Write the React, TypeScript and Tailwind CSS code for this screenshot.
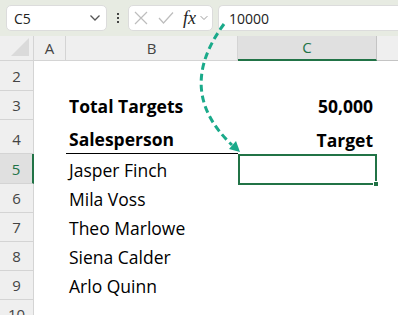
import React from 'react';

const rows = [
    {n: 2, h: 30},
    {n: 3, h: 29},
    {n: 4, h: 34},
    {n: 5, h: 30},
    {n: 6, h: 29},
    {n: 7, h: 29},
    {n: 8, h: 29},
    {n: 9, h: 29},
    {n: 10, h: 29},
];

const names = ['Jasper Finch', 'Mila Voss', 'Theo Marlowe', 'Siena Calder', 'Arlo Quinn'];

const Chevron = ({className}: {className?: string}) => (
    <svg width="12" height="8" viewBox="0 0 12 8" className={className}>
        <path d="M1.5 1.5 L6 6 L10.5 1.5" fill="none" stroke="currentColor" strokeWidth="1.3"/>
    </svg>
);

const FormulaBar = () => (
    <div className="h-[36px] bg-[#e7ebe2] flex items-center gap-0 pl-[6px]">
        <div className="w-[101px] h-[26px] bg-white rounded-[5px] border border-[#dcdcdc] flex items-center pl-[7px] pr-[5px] justify-between">
            <span className="text-[14px] text-[#222]">C5</span>
            <Chevron className="text-[#555]"/>
        </div>
        <div className="w-[21px] flex flex-col items-center gap-[2px]">
            <span className="w-[2px] h-[2px] bg-[#444]"/>
            <span className="w-[2px] h-[2px] bg-[#444]"/>
            <span className="w-[2px] h-[2px] bg-[#444]"/>
        </div>
        <div className="w-[85px] h-[26px] bg-white rounded-[5px] border border-[#dcdcdc] flex items-center pl-[5px]">
            <svg width="14" height="14" viewBox="0 0 14 14">
                <path d="M1 1 L13 13 M13 1 L1 13" stroke="#bdbdbd" strokeWidth="1.2"/>
            </svg>
            <svg width="16" height="14" viewBox="0 0 16 14" className="ml-[10px]">
                <path d="M1 7 L5.5 12 L15 1.5" fill="none" stroke="#bdbdbd" strokeWidth="1.2"/>
            </svg>
            <span className="ml-[9px] text-[18px] italic text-[#222] leading-none"
                  style={{fontFamily: '"Liberation Serif", serif'}}>fx</span>
            <Chevron className="ml-[2px] text-[#999] scale-75"/>
        </div>
        <div className="ml-[5px] flex-1 h-[26px] bg-white rounded-l-[5px] border border-r-0 border-[#dcdcdc] flex items-center pl-[10px]">
            <span className="text-[14px] text-[#222]">10000</span>
        </div>
    </div>
);

const App = () => {
    return (
        <div className="relative w-[398px] h-[315px] overflow-hidden bg-white"
             style={{fontFamily: '"Open Sans", sans-serif'}}>
            <FormulaBar/>

            {/* column headers */}
            <div className="flex h-[25px] text-[15px] text-[#444]">
                <div className="w-[34px] bg-[#efefef] border-r border-b border-[#d4d4d4] relative">
                    <svg width="20" height="20" viewBox="0 0 20 20" className="absolute right-[3px] bottom-[3px]">
                        <path d="M19 1 L19 19 L1 19 Z" fill="#dadada"/>
                    </svg>
                </div>
                <div className="w-[32px] bg-[#efefef] border-r border-b border-[#d4d4d4] flex items-center justify-center">A</div>
                <div className="w-[172px] bg-[#efefef] border-r border-b border-[#d4d4d4] flex items-center justify-center">B</div>
                <div className="w-[139px] bg-[#e0e0e0] border-r border-[#c4c4c4] border-b-2 border-b-[#217346] flex items-center justify-center text-[#217346]">C</div>
                <div className="flex-1 bg-[#efefef] border-b border-[#c4c4c4]"/>
            </div>

            {/* rows */}
            {rows.map(r => (
                <div key={r.n} className="flex" style={{height: r.h}}>
                    <div className={`w-[34px] flex items-end justify-center pb-[3px] text-[15px] border-b border-[#d4d4d4] ${r.n === 5 ? 'bg-[#e0e0e0] border-r-2 border-r-[#217346] text-[#217346]' : 'bg-[#efefef] border-r border-r-[#d4d4d4] text-[#444]'}`}>
                        {r.n}
                    </div>
                    <div className="w-[32px]"/>
                    <div className={`w-[172px] flex items-end pl-[3px] pb-[5px] text-[17.5px] leading-none text-black ${r.n === 4 ? 'border-b border-black' : ''}`}>
                        {r.n === 3 && <span className="font-bold">Total Targets</span>}
                        {r.n === 4 && <span className="font-bold">Salesperson</span>}
                        {r.n >= 5 && r.n <= 9 && <span>{names[r.n - 5]}</span>}
                    </div>
                    <div className="w-[139px] flex items-end justify-end pr-[4px] pb-[5px] text-[17.5px] leading-none text-black relative">
                        {r.n === 3 && <span className="font-bold">50,000</span>}
                        {r.n === 4 && <span className="font-bold">Target</span>}
                        {r.n === 5 && (
                            <div className="absolute left-0 top-0 w-[139px] h-[31px] border-2 border-[#217346]">
                                <div className="absolute -right-[4px] -bottom-[4px] w-[6px] h-[6px] bg-[#217346] border border-white"/>
                            </div>
                        )}
                    </div>
                    <div className="flex-1"/>
                </div>
            ))}

            {/* dashed arrow from the formula bar to the cell */}
            <svg className="absolute left-0 top-0 pointer-events-none" width="398" height="315">
                <path d="M224 24 C 190 70, 195 110, 232 145" fill="none" stroke="#1aaa8a" strokeWidth="3"
                      strokeDasharray="7 4"/>
                <path d="M240 152 L229 149 L236 141 Z" fill="#1aaa8a"/>
            </svg>
        </div>
    );
};

export default App;
